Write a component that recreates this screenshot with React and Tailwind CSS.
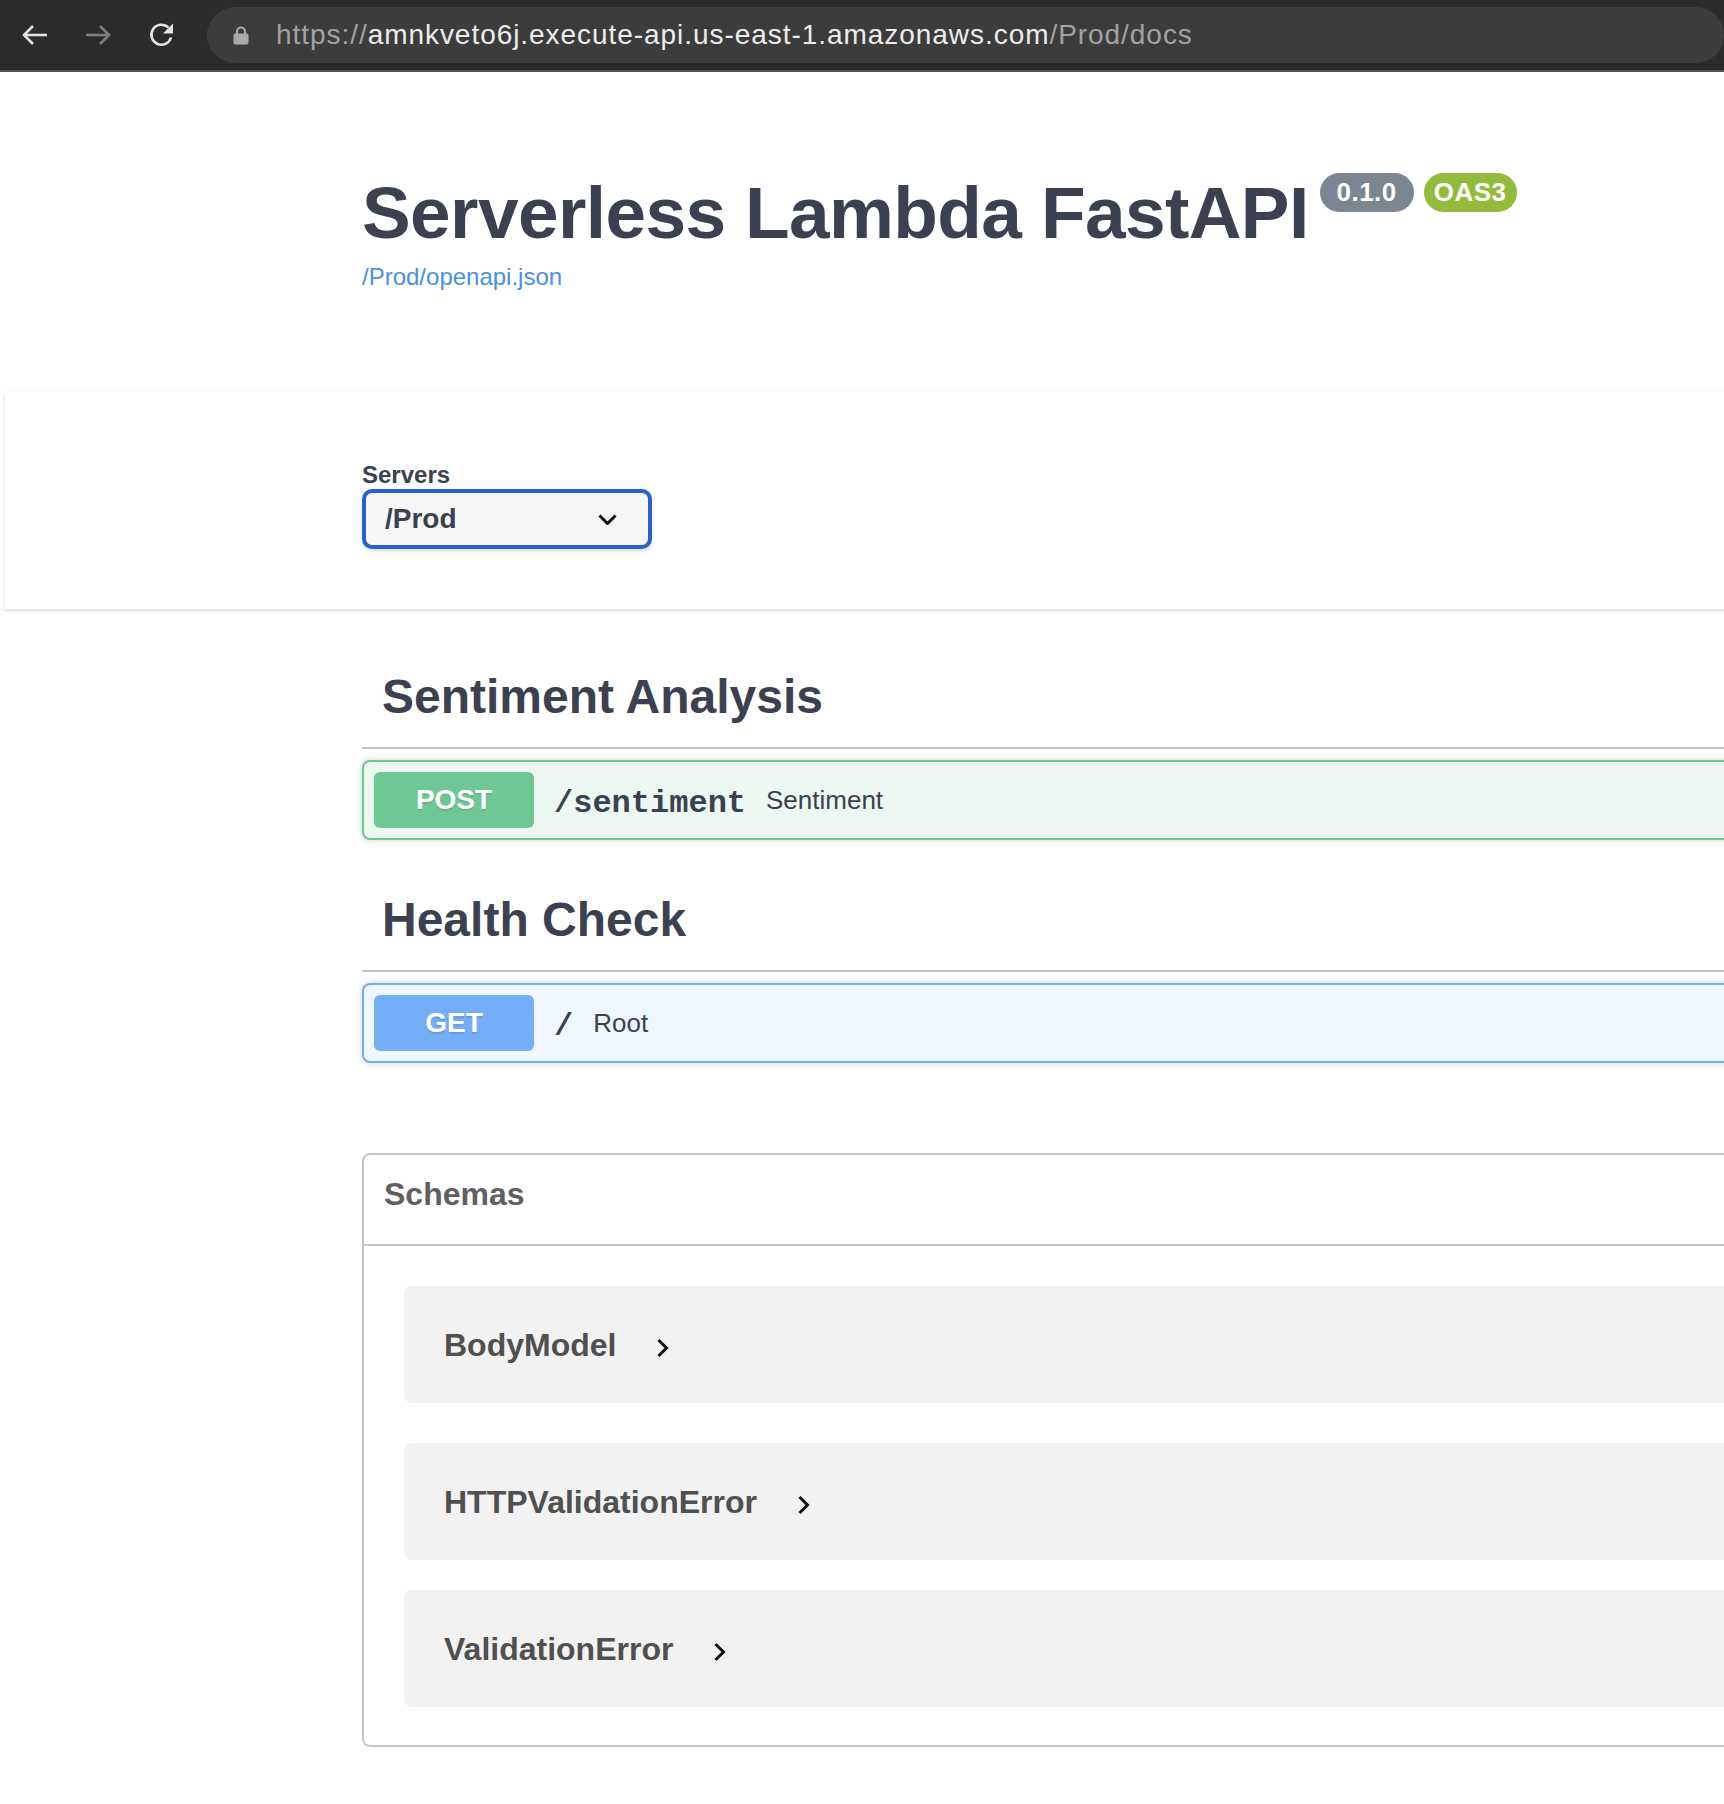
import React from "react";

function BackIcon({ color }) {
  return (
    <svg width="27" height="22" viewBox="0 0 27 22" fill="none">
      <path d="M26 11H3" stroke={color} strokeWidth="2.6" />
      <path d="M12 2L3 11l9 9" stroke={color} strokeWidth="2.6" strokeLinejoin="miter" />
    </svg>
  );
}

function ForwardIcon({ color }) {
  return (
    <svg width="27" height="22" viewBox="0 0 27 22" fill="none">
      <path d="M1 11h23" stroke={color} strokeWidth="2.6" />
      <path d="M15 2l9 9-9 9" stroke={color} strokeWidth="2.6" />
    </svg>
  );
}

function ReloadIcon() {
  return (
    <svg width="28" height="26" viewBox="0 0 28 26" fill="none">
      <path d="M23 15.5A10 10 0 1 1 20.4 5.6" stroke="#e3e3e3" strokeWidth="2.6" fill="none" />
      <path d="M25 1.5v10h-10z" fill="#e3e3e3" />
    </svg>
  );
}

function LockIcon() {
  return (
    <svg width="16" height="19" viewBox="0 0 16 19" fill="none">
      <path d="M4 8.5V5.5a4 4 0 0 1 8 0v3" stroke="#a9a9a9" strokeWidth="2.2" />
      <rect x="0.5" y="7.5" width="15" height="11" rx="2" fill="#a9a9a9" />
    </svg>
  );
}

function SelectChevron() {
  return (
    <svg width="19" height="11" viewBox="0 0 19 11" fill="none">
      <path d="M1.5 1.5l8 8 8-8" stroke="#111" strokeWidth="3" />
    </svg>
  );
}

function ModelChevron() {
  return (
    <svg width="13" height="20" viewBox="0 0 13 20" fill="none">
      <path d="M2.5 2l8 8-8 8" stroke="#111" strokeWidth="3" />
    </svg>
  );
}

function TagHeader({ title }) {
  return (
    <div className="h-[102px] flex items-center pl-[20px] border-b-2 border-[#c4c6cb]">
      <h3 className="text-[48px] leading-[48px] font-bold text-[#3b4151]">{title}</h3>
    </div>
  );
}

function OpBlock({ method, path, summary, badgeBg, borderColor, bg }) {
  return (
    <div
      className={`mt-[11px] h-[80px] border-2 rounded-[8px] flex items-center pl-[10px] shadow-[0_0_6px_rgba(0,0,0,0.19)] ${borderColor} ${bg}`}
    >
      <div
        className={`w-[160px] h-[56px] rounded-[6px] flex items-center justify-center text-white font-bold text-[28px] [text-shadow:0_2px_0_rgba(0,0,0,0.1)] ${badgeBg}`}
      >
        {method}
      </div>
      <span className="mt-[7px] px-[20px] text-[#3b4151] font-['Liberation_Mono','Courier_New',monospace] font-bold text-[32px]">
        {path}
      </span>
      <span className="text-[26px] text-[#3b4151]">{summary}</span>
    </div>
  );
}

function ModelRow({ name, mt }) {
  return (
    <div className={`${mt} ml-[40px] h-[117px] bg-[#f2f2f2] rounded-[8px] flex items-center pl-[40px]`}>
      <span className="text-[32px] font-bold text-[#505050]">{name}</span>
      <span className="ml-[40px] mt-[6px] flex">
        <ModelChevron />
      </span>
    </div>
  );
}

export default function App() {
  return (
    <div className="w-[1724px] h-[1804px] overflow-hidden bg-white font-['Liberation_Sans',Arial,sans-serif]">
      {/* Browser bar */}
      <div className="h-[72px] bg-[#2b2b2b] border-b-2 border-[#535353] flex items-center">
        <div className="pl-[21px] flex items-center">
          <BackIcon color="#e3e3e3" />
        </div>
        <div className="ml-[37px] flex items-center">
          <ForwardIcon color="#7e7e7e" />
        </div>
        <div className="ml-[36px] flex items-center">
          <ReloadIcon />
        </div>
        <div className="ml-[31px] w-[1600px] h-[56px] rounded-full bg-[#3c3c3c] flex items-center pl-[26px]">
          <LockIcon />
          <span className="ml-[27px] text-[28px] tracking-[0.95px] whitespace-nowrap">
            <span className="text-[#a2a2a2]">https://</span>
            <span className="text-[#ececec]">amnkveto6j.execute-api.us-east-1.amazonaws.com</span>
            <span className="text-[#a2a2a2]">/Prod/docs</span>
          </span>
        </div>
      </div>

      {/* Info */}
      <div className="pl-[362px]">
        <div className="mt-[104px] flex items-start">
          <h2 className="text-[73px] leading-[73px] font-bold tracking-[-0.6px] text-[#3b4151] whitespace-nowrap">
            Serverless Lambda FastAPI
          </h2>
          <div className="ml-[11px] -mt-[3px] flex gap-[10px]">
            <span className="w-[94px] h-[39px] rounded-full bg-[#7d8492] text-white font-bold text-[26px] flex items-center justify-center tracking-[0.5px]">
              0.1.0
            </span>
            <span className="w-[93px] h-[39px] rounded-full bg-[#93bc3c] text-white font-bold text-[26px] flex items-center justify-center tracking-[0.5px]">
              OAS3
            </span>
          </div>
        </div>
        <div className="mt-[16px] text-[24px] leading-[24px] text-[#4a8fe0]">/Prod/openapi.json</div>
      </div>

      {/* Servers */}
      <div className="mt-[103px] ml-[5px] w-[1800px] bg-white shadow-[0_2px_4px_rgba(0,0,0,0.15)] pl-[357px] pt-[71px] pb-[60px]">
        <div className="text-[24px] leading-[24px] font-bold text-[#3b4151]">Servers</div>
        <div className="mt-[2px] w-[290px] h-[60px] border-4 border-[#2762c7] rounded-[10px] bg-[#f6f6f6] flex items-center pl-[19px] pr-[31px] justify-between shadow-[0_2px_4px_rgba(0,0,0,0.15)]">
          <span className="text-[28px] font-bold text-[#3b4151]">/Prod</span>
          <SelectChevron />
        </div>
      </div>

      {/* Operations */}
      <div className="pl-[362px]">
        <div className="w-[1500px]">
          <div className="mt-[38px]">
            <TagHeader title="Sentiment Analysis" />
            <OpBlock
              method="POST"
              path="/sentiment"
              summary="Sentiment"
              badgeBg="bg-[#6fc893]"
              borderColor="border-[#6fc893]"
              bg="bg-[#eef8f2]"
            />
          </div>
          <div className="mt-[30px]">
            <TagHeader title="Health Check" />
            <OpBlock
              method="GET"
              path="/"
              summary="Root"
              badgeBg="bg-[#74aef6]"
              borderColor="border-[#74aef6]"
              bg="bg-[#eff6fe]"
            />
          </div>

          {/* Schemas */}
          <div className="mt-[90px] border-2 border-[#c4c6cb] rounded-[8px] pb-[38px]">
            <div className="h-[91px] border-b-2 border-[#c4c6cb] pl-[20px] pt-[23px]">
              <h4 className="text-[32px] leading-[32px] font-bold text-[#606060]">Schemas</h4>
            </div>
            <ModelRow name="BodyModel" mt="mt-[40px]" />
            <ModelRow name="HTTPValidationError" mt="mt-[40px]" />
            <ModelRow name="ValidationError" mt="mt-[30px]" />
          </div>
        </div>
      </div>
    </div>
  );
}
